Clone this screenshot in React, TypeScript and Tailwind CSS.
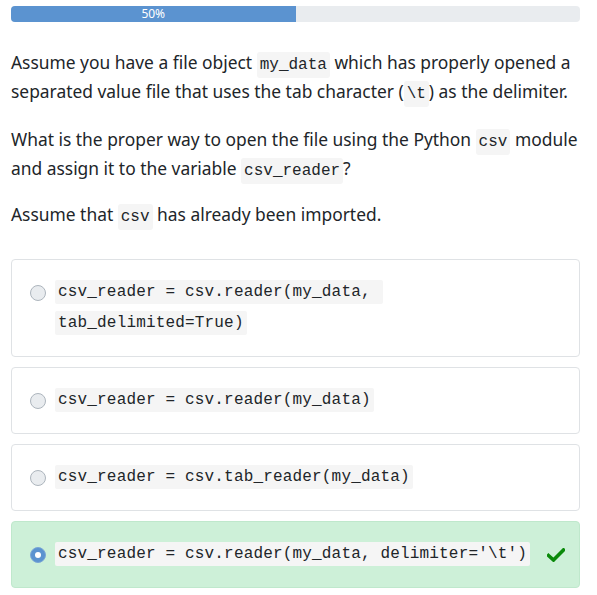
import React from "react";

const mono = { fontFamily: '"Liberation Mono", "DejaVu Sans Mono", monospace' };

function IC({ children }: { children: React.ReactNode }) {
  return (
    <code
      className="bg-[#f5f5f5] text-[#212529] text-[16px] leading-none px-[3px] py-[4px] rounded-[3px]"
      style={mono}
    >
      {children}
    </code>
  );
}

function Radio({ checked }: { checked?: boolean }) {
  if (checked) {
    return (
      <span className="block w-[16px] h-[16px] rounded-full bg-[#5b93d0] border border-[#7aa6d6] flex items-center justify-center shrink-0">
        <span className="block w-[6px] h-[6px] rounded-full bg-white" />
      </span>
    );
  }
  return <span className="block w-[16px] h-[16px] rounded-full bg-[#e9ecef] border border-[#adb5bd] shrink-0" />;
}

function Option({
  lines,
  checked,
}: {
  lines: string[];
  checked?: boolean;
}) {
  return (
    <div
      className={
        "rounded-[4px] border px-[18px] py-[17px] flex items-start " +
        (checked ? "bg-[#cdf0d8] border-[#bfe8cc]" : "bg-white border-[#dfe2e5]")
      }
    >
      <div className="pt-[8px] pr-[9px]">
        <Radio checked={checked} />
      </div>
      <div className="flex-1 text-[16px] tracking-[0.17px] leading-[31px] text-[#212529]" style={mono}>
        {lines.map((l, i) => (
          <React.Fragment key={i}>
            <span className="bg-[#f5f5f5] px-[3px] py-[3px] whitespace-pre rounded-[2px]">{l}</span>
            {i < lines.length - 1 && <br />}
          </React.Fragment>
        ))}
      </div>
      {checked && (
        <svg className="mt-[9px] mr-[-4px]" width="18" height="14" viewBox="0 0 18 14">
          <path d="M1.5 7.5 L6.5 12 L16.5 2" fill="none" stroke="#0a8a0a" strokeWidth="3.6" strokeLinecap="square" />
        </svg>
      )}
    </div>
  );
}

export default function App() {
  return (
    <div className="w-[597px] h-[595px] bg-white pl-[11px] pr-[17px] pt-[6px]" style={{ fontFamily: '"Noto Sans", sans-serif' }}>
      <div className="h-[16px] w-full rounded-[4px] bg-[#e9ecef] overflow-hidden flex">
        <div className="w-1/2 h-full bg-[#5b93d0] text-white text-[12px] leading-[16px] text-center">50%</div>
      </div>
      <div className="mt-[26px] text-[17.4px] leading-[29px] text-[#212529] whitespace-nowrap">
        <p>
          Assume you have a file object <IC>my_data</IC> which has properly opened a<br />
          separated value file that uses the tab character (<IC>\t</IC>) as the delimiter.
        </p>
        <p className="mt-[19px]">
          What is the proper way to open the file using the Python <IC>csv</IC> module<br />
          and assign it to the variable <IC>csv_reader</IC>?
        </p>
        <p className="mt-[17px]">
          Assume that <IC>csv</IC> has already been imported.
        </p>
      </div>
      <div className="mt-[30px] flex flex-col gap-[10px]">
        <Option lines={["csv_reader = csv.reader(my_data, ", "tab_delimited=True)"]} />
        <Option lines={["csv_reader = csv.reader(my_data)"]} />
        <Option lines={["csv_reader = csv.tab_reader(my_data)"]} />
        <Option lines={["csv_reader = csv.reader(my_data, delimiter='\\t')"]} checked />
      </div>
    </div>
  );
}
